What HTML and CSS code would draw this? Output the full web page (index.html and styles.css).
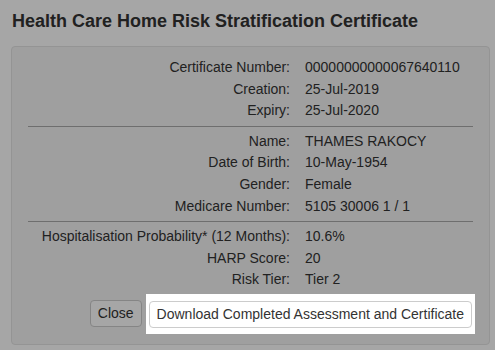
FILE: index.html
```html
<!DOCTYPE html>
<html lang="en">
<head>
  <meta charset="UTF-8">
  <meta name="viewport" content="width=device-width, initial-scale=1.0">
  <title>Certificate</title>
  <link rel="stylesheet" href="styles.css">
</head>
<body>
  <div class="page">
    <h4 class="title">Health Care Home Risk Stratification Certificate</h4>

    <div class="well">
      <div class="details">
        <span class="lbl">Certificate Number:</span><span class="val">00000000000067640110</span>
        <span class="lbl">Creation:</span><span class="val">25-Jul-2019</span>
        <span class="lbl">Expiry:</span><span class="val">25-Jul-2020</span>
      </div>
      <hr>
      <div class="details">
        <span class="lbl">Name:</span><span class="val">THAMES RAKOCY</span>
        <span class="lbl">Date of Birth:</span><span class="val">10-May-1954</span>
        <span class="lbl">Gender:</span><span class="val">Female</span>
        <span class="lbl">Medicare Number:</span><span class="val">5105 30006 1 / 1</span>
      </div>
      <hr>
      <div class="details">
        <span class="lbl">Hospitalisation Probability* (12 Months):</span><span class="val">10.6%</span>
        <span class="lbl">HARP Score:</span><span class="val">20</span>
        <span class="lbl">Risk Tier:</span><span class="val">Tier 2</span>
      </div>

      <div class="actions">
        <button class="btn">Close</button>
        <div class="highlight">
          <button class="btn">Download Completed Assessment and Certificate</button>
        </div>
      </div>
    </div>
  </div>

  <div class="overlay"></div>
</body>
</html>
```

FILE: styles.css
```css
body{
  margin: 0;
  background: #fff;
  font-family: "Liberation Sans", Arial, sans-serif;
  font-size: 14px;
  color: #333;
}
.page{
  padding: 10px 5px 0 11px;
}
.title{
  margin: 0 0 14px 1px;
  font-size: 18px;
  line-height: 22px;
  font-weight: bold;
}
.well{
  background: #f5f5f5;
  border: 1px solid #e3e3e3;
  border-radius: 4px;
  padding: 10px 16px 10px 16px;
}
.details{
  display: grid;
  grid-template-columns: 262px 1fr;
  column-gap: 15px;
  line-height: 21.6px;
}
.lbl{
  text-align: right;
}
hr{
  border: 0;
  border-top: 1px solid #aaa;
  margin: 4px 0;
}
.actions{
  display: flex;
  justify-content: flex-end;
  align-items: center;
  gap: 4px;
  margin-top: 3px;
}
.btn{
  font-family: inherit;
  font-size: 14px;
  line-height: 19px;
  color: #333;
  background: #fff;
  border: 1px solid #ccc;
  border-radius: 4px;
  padding: 3px 7px;
  cursor: pointer;
}
.highlight{
  position: relative;
  z-index: 10;
  background: #fff;
  padding: 7px 3px 6px 3px;
  margin-right: -2px;
}
.overlay{
  position: fixed;
  inset: 0;
  background: rgba(0, 0, 0, 0.35);
  z-index: 5;
}
```
